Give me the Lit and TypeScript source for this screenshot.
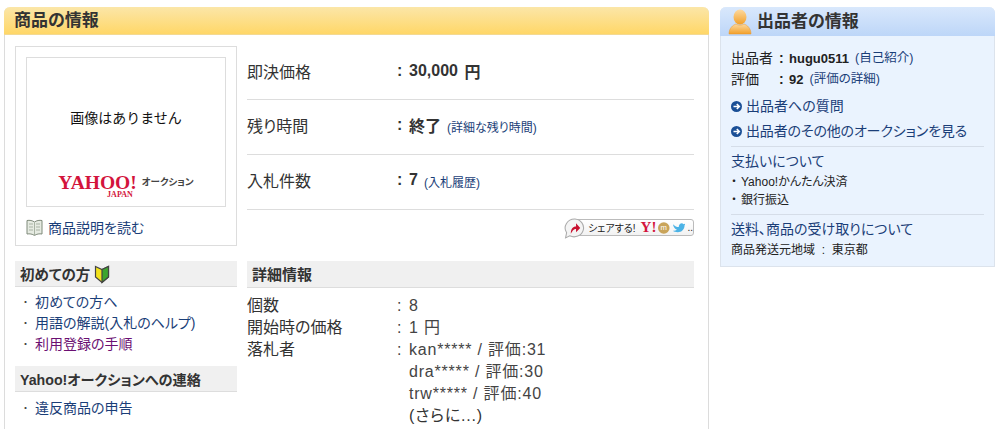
import { LitElement, html, css } from "lit";
import { customElement } from "lit/decorators.js";

@customElement("app-root")
export class AppRoot extends LitElement {
  static styles = css`
    :host { display: block; width: 1000px; height: 429px; overflow: hidden; background: #fff;
      font-family: "Liberation Sans", "Noto Sans CJK JP", sans-serif; font-feature-settings: "palt"; color: #222; font-size: 14px; }
    * { box-sizing: border-box; }
    a { color: #1a3e78; text-decoration: none; }
    .page { display: flex; align-items: flex-start; gap: 11px; padding: 7px 0 0 4px; }
    .main { width: 705px; height: 440px; border: 1px solid #dcdcdc; border-width: 0 1px; border-radius: 6px 6px 0 0; }
    .main-h { height: 28px; margin: 0 -1px; border-radius: 6px 6px 0 0; background: linear-gradient(#fbe6a8, #ffd768);
      border-bottom: 1px solid #f3d993; padding-left: 10px; font-weight: bold; font-size: 17px; line-height: 28px; color: #333; }
    .cols { display: flex; gap: 10px; padding: 11px 0 0 10px; }
    .left { width: 222px; }
    .right { width: 447px; }
    .imgbox { height: 200px; border: 1px solid #ddd; padding: 10px; }
    .img { width: 200px; height: 150px; border: 1px solid #ddd; display: flex; flex-direction: column; align-items: center; }
    .noimg { margin-top: 50px; font-size: 14px; line-height: 20px; color: #111; font-feature-settings: normal; }
    .logo { margin-top: 46px; display: flex; align-items: flex-start; gap: 5px; color: #444; }
    .yj { display: flex; flex-direction: column; align-items: flex-end; color: #d3143c; font-family: "Liberation Serif", serif; font-weight: bold; }
    .yj b { font-size: 19.5px; line-height: 17px; }
    .yj i { font-style: normal; font-size: 8px; line-height: 7px; margin-right: 4px; }
    .auc { font-weight: bold; font-size: 9.5px; line-height: 16px; }
    .read { display: flex; align-items: center; gap: 5px; height: 22px; margin-top: 9px; font-size: 14px; }
    .sub { height: 26px; background: #f0f0f0; border-bottom: 1px solid #ddd; padding: 2px 0 0 5px; font-weight: bold; font-size: 14.500px; line-height: 24px; color: #333;
      display: flex; align-items: center; gap: 4px; }
    .sub.tall { height: 27px; padding-top: 0; font-size: 15px; line-height: 27px; }
    .s1 { margin-top: 15px; }
    .s2 { margin-top: 11px; font-size: 14.200px; }
    ul { list-style: none; margin: 0; padding: 5px 0 0 8px; }
    ul.last { padding-top: 6px; }
    li { display: flex; gap: 4px; line-height: 21px; font-size: 14px; }
    li::before { content: "・"; width: 8px; font-size: 10px; color: #444; }
    .visited { color: #6b0f72; }
    .stat { display: flex; align-items: center; height: 55px; padding-bottom: 4px; border-bottom: 1px solid #ddd; }
    .stat.f { height: 54px; }
    .lbl { width: 150px; font-size: 16px; color: #333; }
    .val { font-weight: bold; font-size: 16px; color: #333; display: flex; align-items: center; white-space: pre; }
    .colon { width: 12px; display: inline-block; }
    .yen { margin-left: 2px; }
    .note { font-weight: normal; font-size: 12px; margin: 3px 0 0 6px; }
    .sharew { display: flex; justify-content: flex-end; height: 51px; padding-top: 8px; }
    .share { position: relative; width: 131px; height: 20px; }
    .share-bar { height: 17px; margin: 1px 0 0 9px; border: 1px solid #bbb; border-radius: 3px; display: flex; align-items: center;
      gap: 2px; padding-left: 15px; font-size: 10px; color: #222; background: linear-gradient(#fff, #f2f2f2); white-space: nowrap; }
    .bubble { position: absolute; left: 0; top: 0; }
    .yy { color: #d3143c; font: bold 15px/1 "Liberation Serif", serif; margin-left: 3px; }
    .detail { padding-top: 7px; }
    .d { display: flex; line-height: 22px; }
    .d .l { width: 150px; font-size: 16px; color: #333; }
    .d .v { font-size: 16px; letter-spacing: .8px; color: #444; }
    .d .v a { color: #333; }
    .indent { padding-left: 12px; }
    .side { width: 275px; height: 260px; background: #eaf3fe; border: 1px solid #dce3ec; border-top: 0; border-radius: 6px 6px 0 0; }
    .side-h { height: 29px; margin: 0 -1px; border-radius: 6px 6px 0 0; background: linear-gradient(#d9e8fc, #bdd6f8);
      display: flex; align-items: center; gap: 5px; padding-left: 8px; font-weight: bold; font-size: 17px; line-height: 29px; color: #333; }
    .side-b { padding: 12px 10px 0 10px; }
    .r { line-height: 21px; font-size: 14px; color: #222; display: flex; align-items: center; }
    .r b { font-weight: bold; font-size: 13px; }
    .r .k { width: 48px; }
    .r .c { width: 10px; font-weight: bold; }
    .r .nt { font-size: 12.500px; margin-left: 6px; }
    .go { display: flex; align-items: center; gap: 4px; font-size: 14px; line-height: 25px; }
    .go.a { margin-top: 4px; }
    .go.long { letter-spacing: -.15px; }
    .hr { border-top: 1px solid #d5dde8; }
    .hr.h1 { margin: 2px 0 3px; }
    .hr.h2 { margin: 5px 0 3px; }
    .t { font-size: 14px; line-height: 22px; display: block; }
    .pay { font-size: 12px; line-height: 18px; color: #222; display: flex; gap: 1px; }
    .pay::before { content: "・"; width: 9px; }
    .pay.first { margin-top: 1px; }
    .from { font-size: 12px; line-height: 20px; color: #222; white-space: pre; }
  `;

  private arrow() {
    return html`<svg width="11" height="11" viewBox="0 0 11 11"><circle cx="5.5" cy="5.5" r="5.5" fill="#1a4f96"/><path d="M2.5 5.5H8M5.8 3l2.5 2.5L5.8 8" fill="none" stroke="#fff" stroke-width="1.6"/></svg>`;
  }

  render() {
    return html`<div class="page">
      <section class="main">
        <div class="main-h">商品の情報</div>
        <div class="cols">
          <div class="left">
            <div class="imgbox">
              <div class="img">
                <div class="noimg">画像はありません</div>
                <div class="logo"><div class="yj"><b>YAHOO!</b><i>JAPAN</i></div><div class="auc">オークション</div></div>
              </div>
              <a class="read" href="#">
                <svg width="17" height="17" viewBox="0 0 17 17"><path d="M8.500 3C6.500 1.500 3.500 1 1 1.500V15c2.500-.5 5.500 0 7.500 1.500C10.500 15 13.500 14.500 16 15V1.500C13.500 1 10.500 1.500 8.500 3z" fill="#e6ebe2" stroke="#7f8a7a"/><path d="M8.500 3v13.500M3 5h4M3 8h4M3 11h4M10 5h4M10 8h4M10 11h4" stroke="#a9b3a4" fill="none"/></svg>
                商品説明を読む</a>
            </div>
            <div class="sub s1">初めての方<svg width="16" height="19" viewBox="0 0 16 19"><path d="M1.500 1.500l6.500 3 6.500-3v10.500l-6.500 5.500-6.500-5.500z" fill="#f2e21c" stroke="#444" stroke-width="1.200"/><path d="M8 4.500l6.500-3v10.500l-6.500 5.500z" fill="#3ea52e" stroke="#444" stroke-width="1.200"/></svg></div>
            <ul>
              <li><a href="#">初めての方へ</a></li>
              <li><a href="#">用語の解説(入札のヘルプ)</a></li>
              <li><a class="visited" href="#">利用登録の手順</a></li>
            </ul>
            <div class="sub s2">Yahoo!オークションへの連絡</div>
            <ul class="last"><li><a href="#">違反商品の申告</a></li></ul>
          </div>
          <div class="right">
            <div class="stat f"><span class="lbl">即決価格</span><span class="val"><span class="colon">:</span>30,000 <span class="yen">円</span></span></div>
            <div class="stat"><span class="lbl">残り時間</span><span class="val"><span class="colon">:</span>終了<a class="note" href="#">(詳細な残り時間)</a></span></div>
            <div class="stat"><span class="lbl">入札件数</span><span class="val"><span class="colon">:</span>7<a class="note" href="#">(入札履歴)</a></span></div>
            <div class="sharew">
              <div class="share">
                <div class="share-bar">シェアする!<span class="yy">Y!</span>
                  <svg width="12" height="12" viewBox="0 0 12 12"><circle cx="6" cy="6" r="6" fill="#c9a45a"/><text x="6" y="8.500" font-size="8" text-anchor="middle" fill="#fff" font-family="Liberation Sans">m</text></svg>
                  <svg width="14" height="11" viewBox="0 0 14 11"><path d="M1 2c2 2 4 3 6 3 0-3 3-5 5-3l2-.5-1 2c0 4-3 7-7 7-2 0-4-.5-5-1.500 2 0 3-.5 4-1.500C3 7 1.500 5 1 2z" fill="#4cb3e6"/></svg>
                  <span>..</span></div>
                <svg class="bubble" width="24" height="22" viewBox="0 0 22 21"><path d="M11 1a9 8.500 0 1 1-5 16l-4 2 1-5A9 8.500 0 0 1 11 1z" fill="#f4f4f4" stroke="#aaa"/><path d="M7 15c0-5 2-7 5-7V5l4 4.500-4 4v-3c-2 0-3 1-5 4.500z" fill="#c8102e"/></svg>
              </div>
            </div>
            <div class="sub tall">詳細情報</div>
            <div class="detail">
              <div class="d"><span class="l">個数</span><span class="v"><span class="colon">:</span>8</span></div>
              <div class="d"><span class="l">開始時の価格</span><span class="v"><span class="colon">:</span>1 円</span></div>
              <div class="d"><span class="l">落札者</span><span class="v"><span class="colon">:</span>kan***** / 評価:31</span></div>
              <div class="d"><span class="l"></span><span class="v indent">dra***** / 評価:30</span></div>
              <div class="d"><span class="l"></span><span class="v indent">trw***** / 評価:40</span></div>
              <div class="d"><span class="l"></span><span class="v indent"><a href="#">(さらに...)</a></span></div>
            </div>
          </div>
        </div>
      </section>
      <aside class="side">
        <div class="side-h">
          <svg width="24" height="26" viewBox="0 0 24 26"><defs><linearGradient id="u" x1="0" y1="0" x2="0" y2="1"><stop offset="0" stop-color="#fcd9a0"/><stop offset="1" stop-color="#f2a02a"/></linearGradient></defs><ellipse cx="12" cy="8" rx="6.500" ry="7.500" fill="url(#u)"/><path d="M1 25c0-6 4-9 7-10 2 1.500 6 1.500 8 0 3 1 7 4 7 10z" fill="url(#u)" stroke="#e8962a" stroke-width=".5"/></svg>
          出品者の情報
        </div>
        <div class="side-b">
          <div class="r"><span class="k">出品者</span><span class="c">:</span><b>hugu0511</b><a class="nt" href="#">(自己紹介)</a></div>
          <div class="r"><span class="k">評価</span><span class="c">:</span><b>92</b><a class="nt" href="#">(評価の詳細)</a></div>
          <a class="go a" href="#">${this.arrow()}出品者への質問</a>
          <a class="go long" href="#">${this.arrow()}出品者のその他のオークションを見る</a>
          <div class="hr h1"></div>
          <a class="t" href="#">支払いについて</a>
          <div class="pay first">Yahoo!かんたん決済</div>
          <div class="pay">銀行振込</div>
          <div class="hr h2"></div>
          <a class="t" href="#">送料、商品の受け取りについて</a>
          <div class="from">商品発送元地域  :  東京都</div>
        </div>
      </aside>
    </div>`;
  }
}
